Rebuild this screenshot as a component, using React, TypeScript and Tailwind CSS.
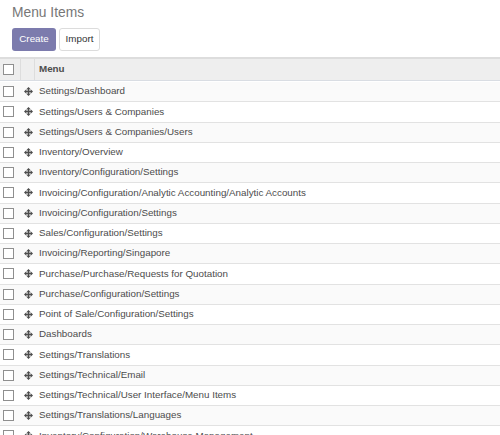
import React from 'react';

const items = [
  'Settings/Dashboard',
  'Settings/Users & Companies',
  'Settings/Users & Companies/Users',
  'Inventory/Overview',
  'Inventory/Configuration/Settings',
  'Invoicing/Configuration/Analytic Accounting/Analytic Accounts',
  'Invoicing/Configuration/Settings',
  'Sales/Configuration/Settings',
  'Invoicing/Reporting/Singapore',
  'Purchase/Purchase/Requests for Quotation',
  'Purchase/Configuration/Settings',
  'Point of Sale/Configuration/Settings',
  'Dashboards',
  'Settings/Translations',
  'Settings/Technical/Email',
  'Settings/Technical/User Interface/Menu Items',
  'Settings/Translations/Languages',
  'Inventory/Configuration/Warehouse Management',
];

const Check = () => (
  <span className="block w-[11px] h-[11px] border border-[#8f8f8f] bg-white" />
);

const Handle = () => (
  <svg width="9" height="9" viewBox="0 0 10 10" className="text-[#4c4c4c]">
    <path d="M5 0 L7.4 2.6 H5.9 V4.1 H7.4 V2.6 L10 5 L7.4 7.4 V5.9 H5.9 V7.4 H7.4 L5 10 L2.6 7.4 H4.1 V5.9 H2.6 V7.4 L0 5 L2.6 2.6 V4.1 H4.1 V2.6 H2.6 Z" fill="currentColor" />
  </svg>
);

export default function App() {
  return (
    <div className="w-[500px] h-[435px] overflow-hidden bg-white font-['Liberation_Sans',Arial,sans-serif] text-[#4c4c4c]">
      <div className="px-3 pt-[3px] h-[27px] text-[13.8px] text-[#777]">Menu Items</div>
      <div className="flex gap-[3px] px-3 pt-[1px]">
        <button className="h-[23px] w-[44px] rounded-[3px] bg-[#7c7bad] text-white text-[9.8px]">Create</button>
        <button className="h-[23px] w-[41px] rounded-[3px] border border-[#dcdcdc] bg-white text-[#333] text-[9.8px]">Import</button>
      </div>
      <div className="mt-[6px]">
        <div className="flex h-[24px] items-center bg-[#eeeeee] border-t-2 border-[#dddddd] border-b border-b-[#d9dde3] text-[9.8px] font-bold text-[#4c4c4c]">
          <div className="w-[21px] h-full flex items-center pl-[3px] border-r border-[#dddddd]"><Check /></div>
          <div className="w-[14px] h-full border-r border-[#dddddd]" />
          <div className="pl-[4px]">Menu</div>
        </div>
        <div className="pt-[1px]">
          {items.map((t, i) => (
            <div
              key={t}
              className={`flex h-[20.25px] items-center border-b border-[#e2e2e2] text-[9.8px] ${i % 2 === 0 ? 'bg-[#fafafa]' : 'bg-white'}`}
            >
              <div className="w-[21px] flex items-center pl-[3px]"><Check /></div>
              <div className="w-[14px] flex items-center justify-center"><Handle /></div>
              <div className="pl-[4px] whitespace-nowrap">{t}</div>
            </div>
          ))}
        </div>
      </div>
    </div>
  );
}
